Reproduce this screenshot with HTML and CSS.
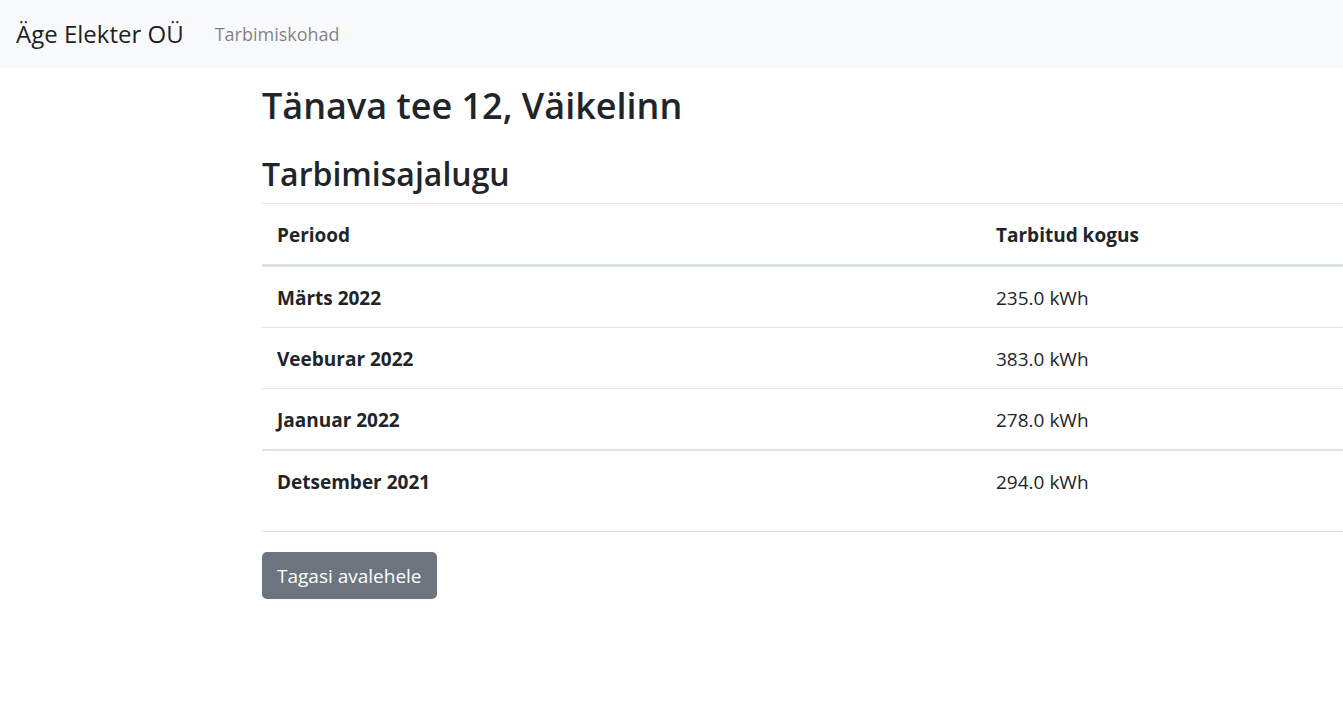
FILE: index.html
```html
<!DOCTYPE html>
<html lang="et">
<head>
<meta charset="utf-8">
<title>Äge Elekter OÜ</title>
<link rel="stylesheet" href="styles.css">
</head>
<body>
<nav class="navbar">
  <a class="brand" href="#">Äge Elekter OÜ</a>
  <a class="nav-link" href="#">Tarbimiskohad</a>
</nav>
<main class="content">
  <h1 class="address">Tänava tee 12, Väikelinn</h1>
  <h2 class="section-title">Tarbimisajalugu</h2>
  <table class="history">
    <thead>
      <tr><th scope="col">Periood</th><th scope="col">Tarbitud kogus</th></tr>
    </thead>
    <tbody>
      <tr><th scope="row">Märts 2022</th><td>235.0 kWh</td></tr>
      <tr><th scope="row">Veeburar 2022</th><td>383.0 kWh</td></tr>
      <tr><th scope="row">Jaanuar 2022</th><td>278.0 kWh</td></tr>
      <tr><th scope="row">Detsember 2021</th><td>294.0 kWh</td></tr>
    </tbody>
  </table>
  <hr class="divider">
  <button class="button" type="button">Tagasi avalehele</button>
</main>
</body>
</html>
```
FILE: styles.css
```css
* {
  box-sizing: border-box;
}

body {
  margin: 0;
  background: #fff;
  color: #212529;
  font-family: "Segoe UI", "Open Sans", "Noto Sans", sans-serif;
  font-size: 19px;
  line-height: 30px;
  overflow-x: hidden;
}

.navbar {
  display: flex;
  align-items: center;
  gap: 31px;
  height: 68px;
  padding: 0 16px;
  background: #f8f9fa;
}

.navbar a {
  text-decoration: none;
}

.brand {
  color: rgba(0, 0, 0, 0.9);
  font-size: 24px;
}

.nav-link {
  color: rgba(0, 0, 0, 0.5);
  font-size: 18px;
}

.content {
  padding-top: 14px;
  margin-left: 262px;
}

.address,
.section-title {
  margin: 0;
  font-weight: 600;
}

.address {
  margin-bottom: 23px;
  font-size: 36px;
  line-height: 48px;
}

.section-title {
  margin-bottom: 8px;
  font-size: 32px;
  line-height: 42px;
}

.history {
  width: 100%;
  border-collapse: collapse;
}

.history th,
.history td {
  padding: 16px 15px 14px;
  border-top: 1px solid #dee2e6;
  text-align: left;
  vertical-align: top;
}

.history th:first-child {
  width: 719px;
}

.history thead th {
  border-bottom: 3px solid #dee2e6;
}

.history tbody tr:last-child > * {
  border-top-width: 2px;
}

.divider {
  height: 1px;
  margin: 20px 0;
  border: 0;
  background: #dfdfdf;
}

.button {
  padding: 9px 15px 8px;
  border: 0;
  border-radius: 5px;
  background: #6c757d;
  color: #fff;
  font: inherit;
}
```
